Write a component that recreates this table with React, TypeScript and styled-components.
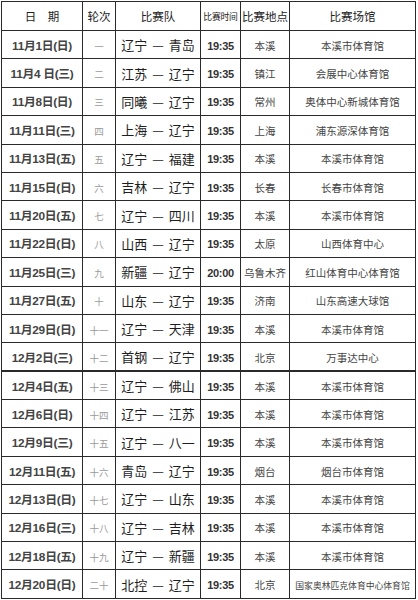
import React from "react";
import styled, { createGlobalStyle } from "styled-components";

const Global = createGlobalStyle`
  html, body { margin: 0; padding: 0; background: #fff; }
  body { font-family: "Liberation Sans", "Noto Sans CJK SC", sans-serif; }
`;

const Page = styled.div`
  padding: 1px 0 0 1px;
  width: 418px;
  box-sizing: border-box;
`;

const Table = styled.table`
  border-collapse: collapse;
  width: 414px;
  table-layout: fixed;
  border: 1px solid #2a2a2a;
`;

const Col = styled.col<{ $w: number }>`
  width: ${(p) => p.$w}px;
`;

const HeadCell = styled.th<{ $small?: boolean }>`
  height: 28px;
  padding: 0;
  border: 1px solid #2a2a2a;
  font-family: "Noto Sans CJK SC", sans-serif;
  font-weight: 400;
  font-size: ${(p) => (p.$small ? "8.8px" : "11.5px")};
  color: #222;
  text-align: center;
  white-space: nowrap;
  letter-spacing: ${(p) => (p.$small ? "-0.2px" : "0")};
`;

const Row = styled.tr<{ $thick?: boolean }>`
  height: 28.4px;
  & > td {
    border-top: ${(p) => (p.$thick ? "2px" : "1px")} solid #2a2a2a;
  }
`;

const Cell = styled.td`
  padding: 0;
  border: 1px solid #2a2a2a;
  text-align: center;
  white-space: nowrap;
  overflow: hidden;
`;

const DateText = styled.span`
  font-family: "Liberation Sans", "Noto Sans CJK SC", sans-serif;
  font-size: 11.8px;
  font-weight: 700;
  color: #444;
  letter-spacing: -0.3px;
`;

const RoundText = styled.span`
  font-family: "Noto Sans CJK SC", serif;
  font-size: 9.5px;
  color: #9a9a9a;
`;

const TeamText = styled.span`
  font-family: "Noto Sans CJK SC", sans-serif;
  font-size: 13px;
  font-weight: 400;
  color: #1e1e1e;
  word-spacing: 2px;
`;

const TimeText = styled.span`
  font-family: "Liberation Sans", sans-serif;
  font-size: 11px;
  font-weight: 700;
  color: #333;
  letter-spacing: -0.3px;
`;

const PlaceText = styled.span<{ $tiny?: boolean }>`
  font-family: "Noto Sans CJK SC", serif;
  font-size: ${(p) => (p.$tiny ? "8.8px" : "10.5px")};
  color: #444;
`;

type Game = [string, string, string, string, string, string];

const games: Game[] = [
  ["11月1日(日)", "一", "辽宁 — 青岛", "19:35", "本溪", "本溪市体育馆"],
  ["11月4 日(三)", "二", "江苏 — 辽宁", "19:35", "镇江", "会展中心体育馆"],
  ["11月8日(日)", "三", "同曦 — 辽宁", "19:35", "常州", "奥体中心新城体育馆"],
  ["11月11日(三)", "四", "上海 — 辽宁", "19:35", "上海", "浦东源深体育馆"],
  ["11月13日(五)", "五", "辽宁 — 福建", "19:35", "本溪", "本溪市体育馆"],
  ["11月15日(日)", "六", "吉林 — 辽宁", "19:35", "长春", "长春市体育馆"],
  ["11月20日(五)", "七", "辽宁 — 四川", "19:35", "本溪", "本溪市体育馆"],
  ["11月22日(日)", "八", "山西 — 辽宁", "19:35", "太原", "山西体育中心"],
  ["11月25日(三)", "九", "新疆 — 辽宁", "20:00", "乌鲁木齐", "红山体育中心体育馆"],
  ["11月27日(五)", "十", "山东 — 辽宁", "19:35", "济南", "山东高速大球馆"],
  ["11月29日(日)", "十一", "辽宁 — 天津", "19:35", "本溪", "本溪市体育馆"],
  ["12月2日(三)", "十二", "首钢 — 辽宁", "19:35", "北京", "万事达中心"],
  ["12月4日(五)", "十三", "辽宁 — 佛山", "19:35", "本溪", "本溪市体育馆"],
  ["12月6日(日)", "十四", "辽宁 — 江苏", "19:35", "本溪", "本溪市体育馆"],
  ["12月9日(三)", "十五", "辽宁 — 八一", "19:35", "本溪", "本溪市体育馆"],
  ["12月11日(五)", "十六", "青岛 — 辽宁", "19:35", "烟台", "烟台市体育馆"],
  ["12月13日(日)", "十七", "辽宁 — 山东", "19:35", "本溪", "本溪市体育馆"],
  ["12月16日(三)", "十八", "辽宁 — 吉林", "19:35", "本溪", "本溪市体育馆"],
  ["12月18日(五)", "十九", "辽宁 — 新疆", "19:35", "本溪", "本溪市体育馆"],
  ["12月20日(日)", "二十", "北控 — 辽宁", "19:35", "北京", "国家奥林匹克体育中心体育馆"],
];

export default function App() {
  return (
    <Page>
      <Global />
      <Table>
        <colgroup>
          <Col $w={81} />
          <Col $w={33} />
          <Col $w={85} />
          <Col $w={40} />
          <Col $w={49} />
          <Col $w={126} />
        </colgroup>
        <thead>
          <tr>
            <HeadCell>日　期</HeadCell>
            <HeadCell>轮次</HeadCell>
            <HeadCell>比赛队</HeadCell>
            <HeadCell $small>比赛时间</HeadCell>
            <HeadCell>比赛地点</HeadCell>
            <HeadCell>比赛场馆</HeadCell>
          </tr>
        </thead>
        <tbody>
          {games.map((g, i) => (
            <Row key={i} $thick={i === 12}>
              <Cell><DateText>{g[0]}</DateText></Cell>
              <Cell><RoundText>{g[1]}</RoundText></Cell>
              <Cell><TeamText>{g[2]}</TeamText></Cell>
              <Cell><TimeText>{g[3]}</TimeText></Cell>
              <Cell><PlaceText>{g[4]}</PlaceText></Cell>
              <Cell><PlaceText $tiny={g[5].length > 10}>{g[5]}</PlaceText></Cell>
            </Row>
          ))}
        </tbody>
      </Table>
    </Page>
  );
}
